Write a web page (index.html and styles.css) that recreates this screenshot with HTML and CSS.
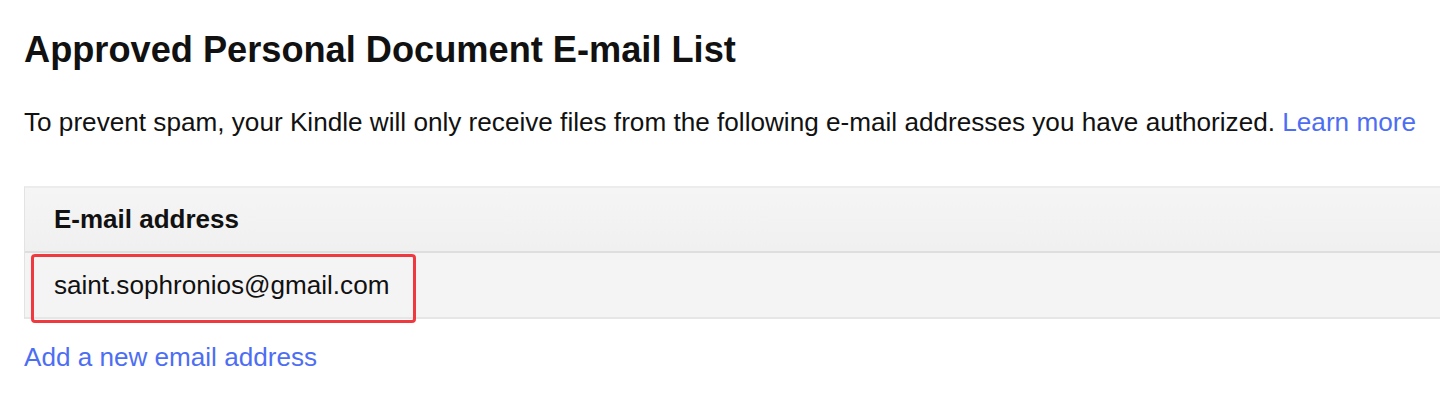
FILE: index.html
```html
<!DOCTYPE html>
<html>
<head>
<meta charset="utf-8">
<link rel="stylesheet" href="styles.css">
</head>
<body>
<div class="page">
  <h1 class="title">Approved Personal Document E-mail List</h1>
  <p class="intro">To prevent spam, your Kindle will only receive files from the following e-mail addresses you have authorized. <a class="link" href="#">Learn more</a></p>
  <div class="table">
    <div class="thead">E-mail address</div>
    <div class="row">
      <span class="email">saint.sophronios@gmail.com</span>
      <span class="highlight"></span>
    </div>
  </div>
  <a class="link add" href="#">Add a new email address</a>
</div>
</body>
</html>
```
FILE: styles.css
```css
html, body {
  margin: 0;
  padding: 0;
  background: #ffffff;
}
body {
  font-family: "Liberation Sans", Arial, sans-serif;
  color: #111111;
}
.page {
  padding: 28px 0 0 24px;
  display: flex;
  flex-direction: column;
  align-items: flex-start;
}
.title {
  margin: 0;
  font-size: 36.2px;
  line-height: 44px;
  font-weight: bold;
}
.intro {
  margin: 35px 0 0 0;
  font-size: 26.15px;
  line-height: 30px;
  white-space: nowrap;
}
.link {
  color: #4d6ef2;
  text-decoration: none;
}
.table {
  margin-top: 49px;
  width: calc(100% + 10px);
  border-left: 1px solid #e3e3e3;
  border-top: 2px solid #ececec;
  background: #f3f3f3;
}
.thead {
  height: 63px;
  display: flex;
  align-items: center;
  padding-left: 29px;
  font-size: 26px;
  font-weight: bold;
  background: linear-gradient(#f5f5f5, #f0f0f0);
  border-bottom: 2px solid #dedede;
}
.row {
  position: relative;
  height: 64px;
  display: flex;
  align-items: center;
  padding-left: 29px;
  font-size: 26.1px;
  background: #f4f4f4;
  border-bottom: 2px solid #e6e6e6;
}
.highlight {
  position: absolute;
  left: 6px;
  top: 1px;
  width: 385px;
  height: 69px;
  border: 3px solid #f0393f;
  border-radius: 4px;
  box-sizing: border-box;
}
.add {
  margin-top: 23px;
  font-size: 26.1px;
  line-height: 30px;
}
```
